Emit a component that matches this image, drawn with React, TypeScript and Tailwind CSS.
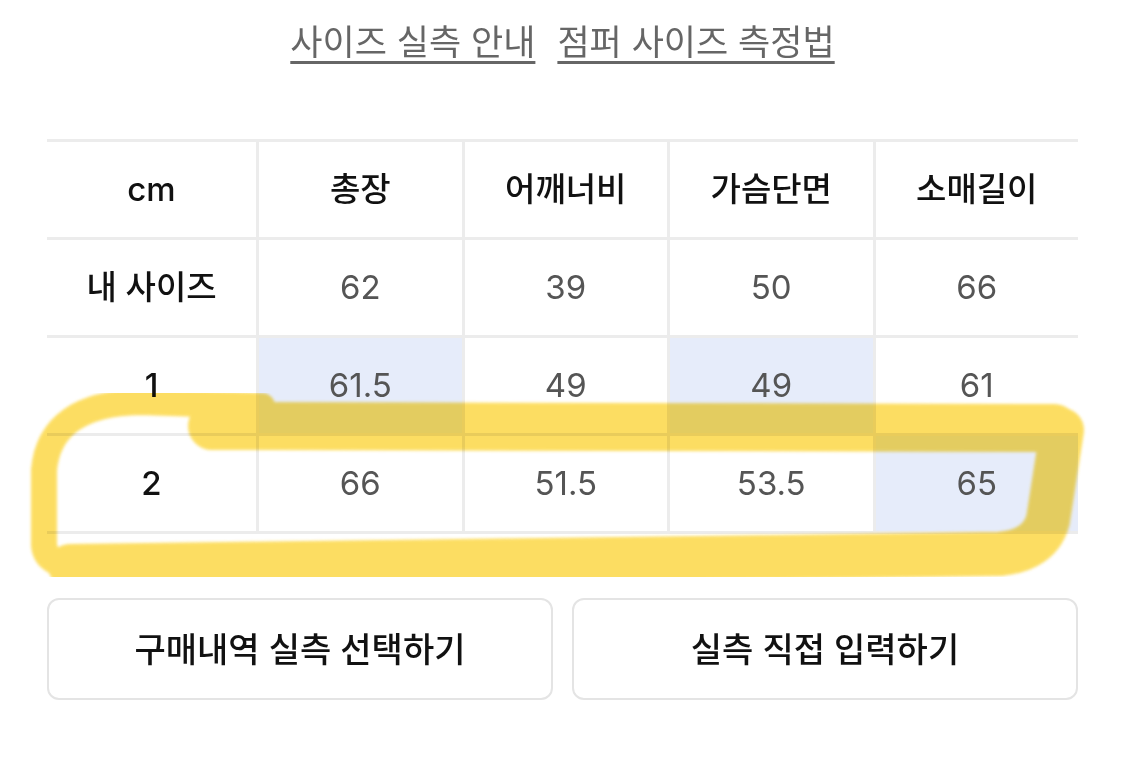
const font = "font-['Inter','Noto_Sans_CJK_KR',sans-serif]";

const columns = ["총장", "어깨너비", "가슴단면", "소매길이"];

const rows: { label: string; values: string[]; marked: number[] }[] = [
  { label: "내 사이즈", values: ["62", "39", "50", "66"], marked: [] },
  { label: "1", values: ["61.5", "49", "49", "61"], marked: [0, 2] },
  { label: "2", values: ["66", "51.5", "53.5", "65"], marked: [3] },
];

function Cell({ children, first, marked, head }: { children: React.ReactNode; first?: boolean; marked?: boolean; head?: boolean }) {
  return (
    <div
      className={
        "flex h-[95px] items-center justify-center " +
        (first ? "" : "border-l-[3px] border-[#ececec] ") +
        (marked ? "bg-[#e6ecfa] " : "") +
        (head ? "text-[33px] font-medium text-[#111]" : "text-[33px] text-[#555]")
      }
    >
      {children}
    </div>
  );
}

function Highlight() {
  return (
    <svg className="pointer-events-none absolute inset-0 mix-blend-multiply" width="1125" height="773" viewBox="0 0 1125 773">
      <defs>
        <filter id="soft" x="-5%" y="-5%" width="110%" height="110%">
          <feGaussianBlur stdDeviation="1.8" />
        </filter>
      </defs>
      <g fill="none" stroke="#fcd53a" strokeLinecap="round" strokeLinejoin="round" opacity="0.8" filter="url(#soft)">
        <path d="M 212 426 L 1054 428" strokeWidth="48" />
        <path d="M 262 406 L 140 402 Q 50 404 44 470 L 44 545 Q 46 570 100 568" strokeWidth="26" />
        <path d="M 70 566 L 1000 554 Q 1040 550 1048 520 L 1062 430" strokeWidth="44" />
      </g>
    </svg>
  );
}

export default function App() {
  return (
    <div className={"relative h-[773px] w-[1125px] overflow-hidden bg-white " + font}>
      <div className="flex justify-center gap-[22px] pt-[18px] text-[35px] leading-[48px] text-[#666]">
        <span className="underline decoration-[3px] underline-offset-[6px]">사이즈 실측 안내</span>
        <span className="underline decoration-[3px] underline-offset-[6px]">점퍼 사이즈 측정법</span>
      </div>

      <div className="mx-[47px] mt-[73px] border-b-[3px] border-[#ececec]">
        <div className="grid grid-cols-[209px_repeat(4,1fr)] border-t-[3px] border-[#ececec]">
          <Cell first head>cm</Cell>
          {columns.map((c) => (
            <Cell key={c} head>{c}</Cell>
          ))}
        </div>
        {rows.map((r) => (
          <div key={r.label} className="grid grid-cols-[209px_repeat(4,1fr)] border-t-[3px] border-[#ececec]">
            <Cell first head>{r.label}</Cell>
            {r.values.map((v, i) => (
              <Cell key={i} marked={r.marked.includes(i)}>{v}</Cell>
            ))}
          </div>
        ))}
      </div>

      <div className="mx-[47px] mt-[64px] grid grid-cols-2 gap-[19px]">
        <button className="h-[102px] rounded-[12px] border-2 border-[#e4e4e4] text-[34px] font-medium text-[#111]">
          구매내역 실측 선택하기
        </button>
        <button className="h-[102px] rounded-[12px] border-2 border-[#e4e4e4] text-[34px] font-medium text-[#111]">
          실측 직접 입력하기
        </button>
      </div>

      <Highlight />
    </div>
  );
}
